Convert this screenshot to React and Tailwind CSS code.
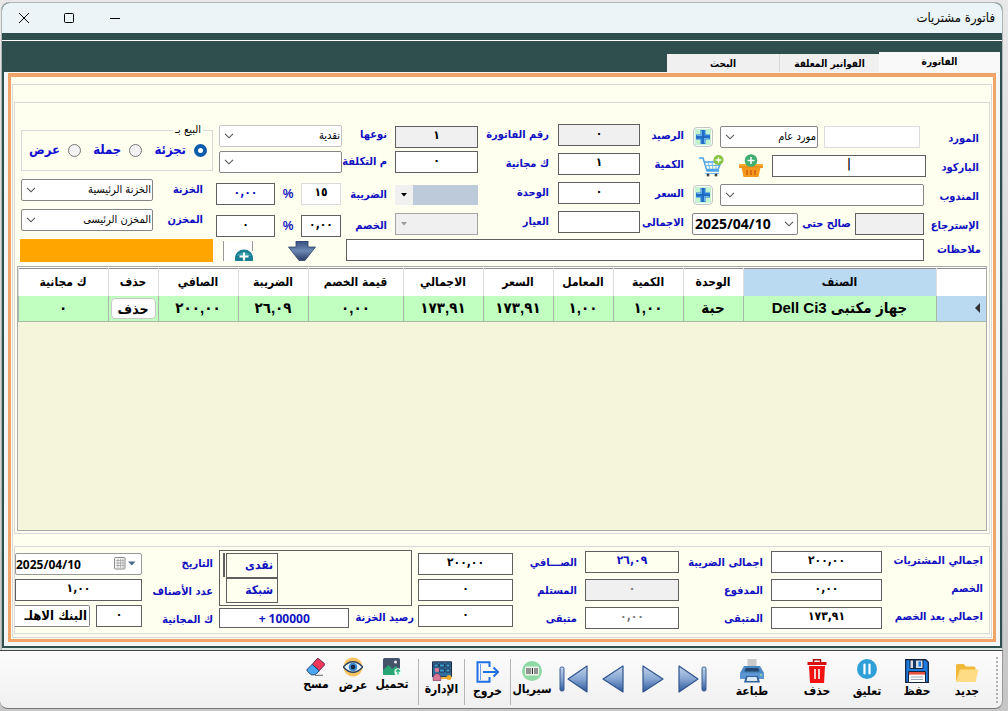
import React from 'react'

const columns = [
    { title: 'الصنف', width: 'w-[193px]' },
    { title: 'الوحدة', width: 'w-[60px]' },
    { title: 'الكمية', width: 'w-[70px]' },
    { title: 'المعامل', width: 'w-[60px]' },
    { title: 'السعر', width: 'w-[70px]' },
    { title: 'الاجمالي', width: 'w-[80px]' },
    { title: 'قيمة الخصم', width: 'w-[95px]' },
    { title: 'الضريبة', width: 'w-[70px]' },
    { title: 'الصافي', width: 'w-[80px]' },
    { title: 'حذف', width: 'w-[50px]' },
    { title: 'ك مجانية', width: 'w-[90px]' },
]

const rows = [
    ['جهاز مكتبى Dell Ci3', 'حبة', '١,٠٠', '١,٠٠', '١٧٣,٩١', '١٧٣,٩١', '٠,٠٠', '٢٦,٠٩', '٢٠٠,٠٠', null, '٠'],
]

/* ---------- form pieces ---------- */

const Label = ({ htmlFor, children }) => (
    <label htmlFor={htmlFor} className="h-[22px] flex items-center whitespace-nowrap text-[11px] font-bold text-[#1010c0]">
        {children}
    </label>
)

const TextBox = ({ className = 'w-full bg-white border-[#5f5f5f]', ...props }) => (
    <input
        type="text"
        className={`block h-[22px] min-w-0 border px-1 pb-1 text-center text-[12px] font-bold outline-none ${className}`}
        {...props}
    />
)

const Chevron = () => (
    <svg viewBox="0 0 10 6" className="pointer-events-none absolute left-[5px] top-2 w-2.5 h-1.5" fill="none" stroke="#555" strokeWidth="1.1">
        <path d="M1 .8l4 4 4-4" />
    </svg>
)

const SelectBox = ({ id, label, value = '', className = 'w-full', border = 'border-[#858585]' }) => (
    <div className={`relative ${className}`}>
        <select
            id={id}
            aria-label={label}
            className={`block h-[22px] w-full appearance-none rounded-xs border bg-white pr-px pl-5 text-[11px] text-black outline-none ${border}`}
        >
            <option>{value}</option>
        </select>
        <Chevron />
    </div>
)

const Radio = ({ id, label, checked }) => (
    <div className="flex items-center gap-2">
        <input
            id={id}
            type="radio"
            name="saleType"
            defaultChecked={checked}
            className="w-[13px] h-[13px] appearance-none rounded-full border border-[#777] bg-[#f3f3f3] checked:border-4 checked:border-[#0c5cab] checked:bg-white"
        />
        <label htmlFor={id} className="text-[13px] leading-5 font-bold text-[#1010d0]">{label}</label>
    </div>
)

const AddButton = ({ label }) => (
    <button aria-label={label} className="w-5 h-5 shrink-0 rounded-sm border border-[#c2c6c2] bg-white flex items-center justify-center">
        <svg viewBox="0 0 16 16" className="w-4 h-4">
            <rect width="16" height="16" fill="#c3f3cf" />
            <path d="M5.500 1h5v4.500H15v5h-4.500V15h-5v-4.500H1v-5h4.500z" fill="#2b7fdb" />
            <path d="M8 1v14M1 8h14" stroke="#1b5cab" strokeWidth="1" />
            <path d="M6.500 2v4.500H2M9.500 14V9.500H14" fill="none" stroke="#6fb4f4" strokeWidth="1" />
        </svg>
    </button>
)

/* ---------- drawings ---------- */

const BasketIcon = () => (
    <svg viewBox="0 0 24 24" className="w-6 h-6">
        <path d="M2.500 13.500h19L19.500 23h-15z" fill="#f39a1e" />
        <path d="M8 16v5M12 16v5M16 16v5" stroke="#d2640f" strokeWidth="1.600" />
        <rect y="10" width="24" height="4" rx="1" fill="#f8a928" />
        <path d="M0 13h24" stroke="#e07a14" strokeWidth="1" />
        <circle cx="12" cy="6.500" r="6.300" fill="#3fae70" />
        <path d="M12 3v7M8.500 6.500h7" stroke="#fff" strokeWidth="1.500" />
    </svg>
)

const CartIcon = () => (
    <svg viewBox="0 0 26 22" className="w-[26px] h-[22px]" fill="none">
        <path d="M1 3h4l4 13h12M6 7h17l-3 7.500H8.500" stroke="#4aa3e8" strokeWidth="1.500" />
        <path d="M10 7l2 7.500M14 7l1 7.500M18 7v7.500M7 10.500h14" stroke="#6dbaf0" />
        <path d="M7 18.500h14" stroke="#6dbaf0" />
        <circle cx="10" cy="20" r="1.500" fill="#444" />
        <circle cx="18" cy="20" r="1.500" fill="#444" />
        <circle cx="20.500" cy="5" r="5" fill="#86c440" />
        <path d="M20.500 2.200v5.600M17.700 5h5.600" stroke="#fff" strokeWidth="1.300" />
    </svg>
)

const DownIcon = () => (
    <svg viewBox="0 0 28 20" className="w-7 h-5">
        <defs>
            <linearGradient id="down" x1="0" y1="0" x2="0" y2="1">
                <stop offset="0" stopColor="#35507d" />
                <stop offset=".5" stopColor="#6d87b4" />
                <stop offset="1" stopColor="#2a3f68" />
            </linearGradient>
        </defs>
        <path d="M8 0h12v6h7.500L17 19.500h-6L.5 6H8z" fill="url(#down)" stroke="#2b4065" strokeWidth=".8" />
    </svg>
)

const TealAddIcon = () => (
    <svg viewBox="0 0 32 20" className="w-8 h-5">
        <path d="M2 0h29v20H2z" fill="#fff" />
        <path d="M1.500 0v20M30.500 0v10" stroke="#999" />
        <path d="M13 20v-3a9 8.500 0 0 1 18 0v3z" fill="#1b7f93" />
        <path d="M15 15a7.500 6 0 0 1 14 0z" fill="#4fb0bd" opacity=".6" />
        <path d="M22 11.500v8M17.500 15.500h9" stroke="#fff" strokeWidth="2.200" />
    </svg>
)

const FolderIcon = () => (
    <svg viewBox="0 0 24 20" className="w-6 h-5">
        <path d="M1 2.500Q1 1 2.500 1h6l2.500 2.500h8Q20.500 3.500 20.500 5v13H1z" fill="#f0b93a" />
        <path d="M5 6.500h18.500L20.500 19H1z" fill="#fddc84" />
    </svg>
)

const FloppyIcon = () => (
    <svg viewBox="0 0 24 24" className="w-6 h-6">
        <path d="M.7 .7h20l2.600 2.600v20H.7z" fill="#1e7be0" stroke="#15233f" strokeWidth="1.300" />
        <path d="M5 1h13v8.500H5z" fill="#d5dde8" stroke="#15233f" />
        <path d="M8 1h3v8H8z" fill="#16375f" />
        <path d="M13.500 2.500h2.500v5h-2.500z" fill="#1e7be0" />
        <path d="M3.500 12.500h17v11h-17z" fill="#fff" stroke="#15233f" />
        <path d="M4 13h16v2.600H4z" fill="#e5533d" />
        <path d="M6 18h12M6 20.500h12" stroke="#9aa7b8" />
    </svg>
)

const PauseIcon = () => (
    <svg viewBox="0 0 20 20" className="w-5 h-5">
        <circle cx="10" cy="10" r="10" fill="#2f9fd8" />
        <path d="M7.500 5.500v9M12.500 5.500v9" stroke="#fff" strokeWidth="2.200" strokeLinecap="round" />
    </svg>
)

const TrashIcon = () => (
    <svg viewBox="0 0 20 24" className="w-5 h-6">
        <path d="M6.500 3V.7h7V3" fill="none" stroke="#a81111" strokeWidth="1.500" />
        <path d="M.5 3h19v3H.5z" fill="#d81010" />
        <path d="M2 7h16l-1 17H3z" fill="#f21212" />
        <path d="M8 10v10M12 10v10" stroke="#fff" strokeWidth="1.600" />
    </svg>
)

const PrinterIcon = () => (
    <svg viewBox="0 0 24 24" className="w-6 h-6">
        <path d="M7.500 0h9v9h-9z" fill="#c9c9c9" />
        <path d="M4 7h16l4 7v6H0v-6z" fill="#4d87c4" />
        <path d="M6 9h12l1.500 3.500h-15z" fill="#23466f" />
        <path d="M0 14h24v6H0z" fill="#5b96d2" />
        <path d="M6 17h12l2 6.500H4z" fill="#2f639b" />
        <path d="M7.500 18h9l1 4h-11z" fill="#dce8f4" />
        <circle cx="21" cy="16" r="1" fill="#8ee0a0" />
    </svg>
)

const BarcodeIcon = () => (
    <svg viewBox="0 0 20 20" className="w-5 h-5">
        <circle cx="10" cy="10" r="10" fill="#8fd9a5" />
        <rect x="3" y="5.500" width="14" height="9" rx="1" fill="#eef3ee" />
        <path d="M5 7v6M7 7v6M10.500 7v6M13 7v6M15 7v6" stroke="#333" strokeWidth="1" />
        <path d="M8.700 7v6" stroke="#333" strokeWidth=".6" />
    </svg>
)

const ExitIcon = () => (
    <svg viewBox="0 0 24 22" className="w-6 h-[22px]" fill="none" stroke="#1f6fe5" strokeWidth="2">
        <path d="M13.500 6V1.200H1.500v19.600h12V16" />
        <path d="M4.500 3v16" strokeWidth="1" stroke="#6aa2f2" />
        <path d="M7 11h15M17.500 6.500L22 11l-4.500 4.500" />
    </svg>
)

const AdminIcon = () => (
    <svg viewBox="0 0 20 20" className="w-5 h-5">
        <path d="M.5 .8h19v15H.5z" fill="#2f6f9e" stroke="#1c2b45" />
        <path d="M2 3h4v3H2zM7.500 3h5v3h-5zM14 3h4v3h-4zM7.500 8h5v3h-5zM14 8h4v3h-4z" fill="#3f9cd2" stroke="#1c2b45" strokeWidth=".8" />
        <circle cx="5" cy="9" r="2.300" fill="#d97794" />
        <path d="M1 19.500q0-7 4-7t4 7z" fill="#d97794" stroke="#6f2f50" strokeWidth=".6" />
        <circle cx="17" cy="16.500" r="2.500" fill="#f0a92b" />
        <path d="M9 17h7" stroke="#f0a92b" strokeWidth="1.800" />
    </svg>
)

const UploadImageIcon = () => (
    <svg viewBox="0 0 19 18" className="w-[19px] h-[18px]">
        <rect width="17" height="17" rx="1.500" fill="#44526a" />
        <path d="M0 12l5.500-5 4 4 3-3L17 12v3.500q0 1.500-1.500 1.500h-14Q0 17 0 15.500z" fill="#27a374" />
        <circle cx="12.500" cy="4" r="1.500" fill="#e8e8e8" />
        <circle cx="15" cy="14" r="3.700" fill="#eafff3" />
        <path d="M15 16.500v-4.500M13 13.500l2-2 2 2" fill="none" stroke="#1fae74" strokeWidth="1.200" />
    </svg>
)

const EyeIcon = () => (
    <svg viewBox="0 0 20 20" className="w-5 h-5">
        <circle cx="10" cy="10" r="9.500" fill="#f9c261" />
        <path d="M.3 10Q10-.5 19.700 10 10 20.500 .3 10z" fill="#e9f3fb" stroke="#27405f" strokeWidth="1.300" />
        <circle cx="10" cy="10" r="4.300" fill="#3b86c8" />
        <circle cx="10" cy="10" r="2.200" fill="#16263d" />
    </svg>
)

const EraserIcon = () => (
    <svg viewBox="0 0 20 18" className="w-5 h-[18px]">
        <path d="M11 .8q1-.6 2 .2l5 4.200q1 1 .2 2l-5 5.600-7-6.400z" fill="#f2365c" stroke="#4a2140" strokeWidth=".9" />
        <path d="M6.200 6.400l7 6.400-3 3.200q-.8.8-2 .8H6q-1 0-1.600-.6l-3-3q-1-1-.1-2.200z" fill="#4aa6ee" stroke="#223a66" strokeWidth=".9" />
        <path d="M9 17.300h8" stroke="#555" strokeWidth=".9" />
    </svg>
)

const NavIcon = ({ path, bar }) => (
    <svg viewBox="0 0 30 28" className="w-[30px] h-7">
        <defs>
            <linearGradient id="steel" x1="0" y1="0" x2="0" y2="1">
                <stop offset="0" stopColor="#c3d3ea" />
                <stop offset=".5" stopColor="#86a5d2" />
                <stop offset="1" stopColor="#2f5a9b" />
            </linearGradient>
        </defs>
        <path d={path} fill="url(#steel)" stroke="#2f558f" strokeWidth="1.200" strokeLinejoin="round" />
        {bar !== undefined && <rect x={bar} y="2" width="4" height="24" rx="1.500" fill="url(#steel)" stroke="#3c5f94" />}
    </svg>
)

const ToolButton = ({ label, children, className = 'w-[50px] pt-2' }) => (
    <button className={`flex flex-col items-center text-[12px] leading-4 font-bold text-black whitespace-nowrap ${className}`}>
        {children}
        <span>{label}</span>
    </button>
)

const Separator = () => <div className="mt-2 h-[46px] w-px shrink-0 bg-[#b5b5b5]" />

/* ---------- sections ---------- */

const TitleBar = () => (
    <header className="h-[30px] shrink-0 flex items-center justify-between rounded-t-lg bg-[#ebf4f6] pr-[7px]">
        <h1 className="text-[13px] text-black">فاتورة مشتريات</h1>
        <div className="flex">
            <button aria-label="تصغير" className="w-[46px] h-7 flex items-center justify-center">
                <svg viewBox="0 0 10 10" className="w-2.5 h-2.5" stroke="#000"><path d="M0 5.500h10" /></svg>
            </button>
            <button aria-label="تكبير" className="w-[46px] h-7 flex items-center justify-center">
                <svg viewBox="0 0 10 10" className="w-2.5 h-2.5" fill="none" stroke="#000"><rect x=".5" y=".5" width="9" height="9" rx="1" /></svg>
            </button>
            <button aria-label="إغلاق" className="w-11 h-7 flex items-center justify-center">
                <svg viewBox="0 0 10 10" className="w-2.5 h-2.5" stroke="#000"><path d="M0 0l10 10M10 0L0 10" /></svg>
            </button>
        </div>
    </header>
)

const Tabs = () => (
    <nav className="h-8 shrink-0 flex items-end bg-[#2f4f4f] border-t border-white px-0.5 text-[10px] font-bold text-black">
        <button className="h-5 w-[121px] bg-[#f9f9f9] pb-0.5">الفاتورة</button>
        <button className="h-[18px] w-[100px] bg-[#f0f0f0] border-l border-[#d9d9d9]">الفواتير المعلقة</button>
        <button className="h-[18px] w-[112px] bg-[#f0f0f0]">البحث</button>
    </nav>
)

const InvoiceForm = () => (
    <section className="shrink-0 pt-[21px]">
        <div className="grid grid-cols-[63fr_235fr_51fr_82fr_80fr_83fr_53fr_126fr_201fr]">
            <div className="min-w-0 pt-1 pr-2.5 flex flex-col gap-[7px]">
                <Label htmlFor="supplierCode">المورد</Label>
                <Label htmlFor="barcode">الباركود</Label>
                <Label htmlFor="agent">المندوب</Label>
                <Label htmlFor="returns">الإسترجاع</Label>
            </div>
            <div className="min-w-0 pt-0.5 flex flex-col gap-[7px]">
                <div className="flex items-center pr-1.5 pl-0.5">
                    <TextBox id="supplierCode" className="w-24 bg-white border-[#dcdcdc]" />
                    <SelectBox label="اسم المورد" value="مورد عام" className="flex-1 mr-1.5 ml-[7px]" />
                    <AddButton label="إضافة مورد" />
                </div>
                <div className="flex items-center h-[22px]">
                    <TextBox id="barcode" className="flex-1 bg-white border-[#5f5f5f]" defaultValue="|" />
                    <button aria-label="السلة" className="mr-[9px]"><BasketIcon /></button>
                    <button aria-label="عربة التسوق" className="mr-[15px] ml-[7px]"><CartIcon /></button>
                </div>
                <div className="flex items-center pr-0.5 pl-0.5">
                    <SelectBox id="agent" className="flex-1 ml-[7px]" />
                    <AddButton label="إضافة مندوب" />
                </div>
                <div className="flex items-center justify-between pr-0.5 pl-px">
                    <TextBox id="returns" className="w-[69px] bg-[#f0f0f0] border-[#5f5f5f]" />
                    <Label htmlFor="validUntil">صالح حتى</Label>
                    <div className="relative w-[106px]" dir="ltr">
                        <select id="validUntil" className="block h-[22px] w-full appearance-none rounded-xs border border-[#858585] bg-white pl-0.5 font-['Noto_Sans',sans-serif] text-[14px] leading-5 font-bold text-black">
                            <option>2025/04/10</option>
                        </select>
                        <svg viewBox="0 0 10 6" className="pointer-events-none absolute right-1 top-2 w-2.5 h-1.5" fill="none" stroke="#555" strokeWidth="1.1">
                            <path d="M1 .8l4 4 4-4" />
                        </svg>
                    </div>
                </div>
            </div>

            <div className="min-w-0 pt-px pr-[7px] flex flex-col gap-[7px]">
                <Label htmlFor="balance">الرصيد</Label>
                <Label htmlFor="quantity">الكمية</Label>
                <Label htmlFor="price">السعر</Label>
                <Label htmlFor="total">الاجمالى</Label>
            </div>
            <div className="min-w-0 flex flex-col gap-[7px]">
                <TextBox id="balance" className="w-full bg-[#f0f0f0] border-[#5f5f5f]" defaultValue="٠" />
                <TextBox id="quantity" defaultValue="١" />
                <TextBox id="price" defaultValue="٠" />
                <TextBox id="total" />
            </div>

            <div className="min-w-0 pr-[9px] flex flex-col gap-[7px]">
                <Label htmlFor="invoiceNo">رقم الفاتورة</Label>
                <Label htmlFor="freeQty">ك مجانية</Label>
                <Label htmlFor="unit">الوحدة</Label>
                <Label htmlFor="caliber">العيار</Label>
            </div>
            <div className="min-w-0 pt-0.5 flex flex-col gap-[11px]">
                <div className="flex flex-col gap-[3px]">
                    <TextBox id="invoiceNo" className="w-full bg-[#f0f0f0] border-[#5f5f5f]" defaultValue="١" />
                    <TextBox id="freeQty" defaultValue="٠" />
                </div>
                <div className="flex flex-col gap-[7px]">
                    <div className="relative h-[22px] py-px">
                        <select id="unit" className="block h-5 w-full appearance-none border-l-[18px] border-[#f0f0f0] bg-[#bccad9]" />
                        <svg viewBox="0 0 6 4" className="pointer-events-none absolute left-1.5 top-[9px] w-1.5 h-1"><path d="M0 0h6L3 3.500z" /></svg>
                    </div>
                    <div className="relative">
                        <select id="caliber" className="block h-[22px] w-full appearance-none border border-[#a5a5a5] bg-[#f0f0f0]" />
                        <svg viewBox="0 0 6 4" className="pointer-events-none absolute left-1.5 top-[9px] w-1.5 h-1" fill="#999"><path d="M0 0h6L3 3.500z" /></svg>
                    </div>
                </div>
            </div>

            <div className="min-w-0 pr-2 flex flex-col gap-[11px]">
                <div className="flex flex-col gap-[5px]">
                    <Label htmlFor="kind">نوعها</Label>
                    <Label htmlFor="cost">م التكلفة</Label>
                </div>
                <div className="flex flex-col gap-[9px]">
                    <Label htmlFor="taxRate">الضريبة</Label>
                    <Label htmlFor="discountRate">الخصم</Label>
                </div>
            </div>
            <div className="min-w-0 pt-px flex flex-col gap-2.5">
                <div className="flex flex-col gap-1 pl-[3px]">
                    <SelectBox id="kind" value="نقدية" border="border-[#c4c4c4]" />
                    <SelectBox id="cost" />
                </div>
                <div className="flex flex-col gap-2.5">
                    <div className="flex items-center justify-between pr-px">
                        <TextBox id="taxRate" className="w-10 bg-white border-[#dcdcdc]" defaultValue="١٥" />
                        <span className="font-['Liberation_Sans',sans-serif] text-[12px] leading-4 font-bold text-[#1010c0]">%</span>
                        <TextBox aria-label="قيمة الضريبة" className="w-[59px] bg-white border-[#5f5f5f] text-[#1010c0]" defaultValue="٠,٠٠" />
                    </div>
                    <div className="flex items-center justify-between pr-px">
                        <TextBox id="discountRate" className="w-10 bg-white border-[#5f5f5f]" defaultValue="٠,٠٠" />
                        <span className="font-['Liberation_Sans',sans-serif] text-[12px] leading-4 font-bold text-[#1010c0]">%</span>
                        <TextBox aria-label="قيمة الخصم" className="w-[59px] bg-white border-[#5f5f5f]" defaultValue="٠" />
                    </div>
                </div>
            </div>

            <div className="min-w-0 pr-[3px] pl-1.5 flex flex-col gap-2">
                <fieldset className="h-[47px] border border-[#d8d8d8] pr-[5px] pl-[7px]">
                    <legend className="mr-1 px-0.5 text-[11px] leading-3 text-black">البيع بـ</legend>
                    <div className="flex items-center justify-between pt-1">
                        <Radio id="retail" label="تجزئة" checked />
                        <Radio id="wholesale" label="جملة" />
                        <Radio id="offer" label="عرض" />
                    </div>
                </fieldset>
                <div className="flex flex-col gap-2">
                    <div className="flex items-center justify-between pr-2.5">
                        <Label htmlFor="safe">الخزنة</Label>
                        <SelectBox id="safe" value="الخزنة الرئيسية" className="w-[132px]" />
                    </div>
                    <div className="flex items-center justify-between pr-2.5">
                        <Label htmlFor="store">المخزن</Label>
                        <SelectBox id="store" value="المخزن الرئيسى" className="w-[132px]" />
                    </div>
                </div>
            </div>
        </div>

        <div className="mt-0.5 grid grid-cols-[63fr_580fr_130fr_201fr]">
            <div className="pr-2"><Label htmlFor="notes">ملاحظات</Label></div>
            <div className="pr-0.5"><TextBox id="notes" /></div>
            <div className="flex items-center justify-between pr-[30px] pl-1.5">
                <button aria-label="إنزال"><DownIcon /></button>
                <button aria-label="إضافة"><TealAddIcon /></button>
            </div>
            <div className="pr-[3px] pl-[5px]"><div className="h-[23px] bg-[#ffa500]" /></div>
        </div>
    </section>
)

const ItemsTable = () => (
    <section className="mt-1 mx-0.5 mb-0.5 flex-1 border border-[#a9a9a9] bg-[#f5f5dc]">
        <div className="border-t border-white">
            <table className="w-full table-fixed border-collapse border-t border-[#909090] text-black">
                <thead>
                    <tr className="h-[27px] bg-white text-[12px] leading-4">
                        <th className="w-[50px]" />
                        {columns.map((col, i) => (
                            <th key={col.title} className={`border-x border-[#dedede] font-bold ${col.width} ${i === 0 ? 'bg-[#badaf2]' : ''}`}>{col.title}</th>
                        ))}
                    </tr>
                </thead>
                <tbody>
                    {rows.map((row, r) => (
                        <tr key={r} className="h-[26px] border-b border-[#a9b9a9] bg-[#c1ffc1] font-['Liberation_Sans','DejaVu_Sans_Condensed',sans-serif] text-[15px] leading-5 font-bold">
                            <th className="bg-[#badaf2]">
                                <svg viewBox="0 0 5 10" className="mr-1.5 w-[5px] h-2.5" fill="#333"><path d="M5 0v10L0 5z" /></svg>
                            </th>
                            {row.map((cell, i) => (
                                <td key={i} className="border-x border-[#a9b9a9] text-center whitespace-nowrap">
                                    {cell === null
                                        ? <button className="h-[21px] w-[45px] rounded-sm border border-[#c8c8c8] bg-[#fdfdfd] align-middle text-[14px] leading-4">حذف</button>
                                        : cell}
                                </td>
                            ))}
                        </tr>
                    ))}
                </tbody>
            </table>
        </div>
    </section>
)

const Totals = () => (
    <section className="shrink-0 mt-3 grid grid-cols-[107fr_111fr_92fr_94fr_72fr_95fr_199fr_77fr_127fr] border border-[#d8d8d8] pt-[3px] pb-0.5">
        <div className="min-w-0 pr-1.5 flex flex-col gap-1.5">
            <Label htmlFor="purchases">اجمالي المشتريات</Label>
            <Label htmlFor="discount">الخصم</Label>
            <Label htmlFor="afterDiscount">اجمالي بعد الخصم</Label>
        </div>
        <div className="min-w-0 pt-px flex flex-col gap-1.5">
            <TextBox id="purchases" defaultValue="٢٠٠,٠٠" />
            <TextBox id="discount" defaultValue="٠,٠٠" />
            <TextBox id="afterDiscount" defaultValue="١٧٣,٩١" />
        </div>
        <div className="min-w-0 pt-0.5 pr-2 flex flex-col gap-1.5">
            <Label htmlFor="taxTotal">اجمالى الضريبة</Label>
            <Label htmlFor="paid">المدفوع</Label>
            <Label htmlFor="remaining">المتبقى</Label>
        </div>
        <div className="min-w-0 pt-px flex flex-col gap-1.5">
            <TextBox id="taxTotal" className="w-full bg-[#fffff0] border-[#5f5f5f] text-[#1010c0]" defaultValue="٢٦,٠٩" />
            <TextBox id="paid" className="w-full bg-[#f0f0f0] border-[#5f5f5f] text-[#777]" defaultValue="٠" />
            <TextBox id="remaining" className="w-full bg-white border-[#5f5f5f] text-[#777]" defaultValue="٠,٠٠" />
        </div>
        <div className="min-w-0 pt-0.5 pr-2 flex flex-col gap-1.5">
            <Label htmlFor="net">الصـــافي</Label>
            <Label htmlFor="received">المستلم</Label>
            <Label htmlFor="left">متبقى</Label>
        </div>
        <div className="min-w-0 pt-[3px] flex flex-col gap-1">
            <TextBox id="net" defaultValue="٢٠٠,٠٠" />
            <TextBox id="received" defaultValue="٠" />
            <TextBox id="left" defaultValue="٠" />
        </div>
        <div className="min-w-0 pr-1 flex flex-col gap-px">
            <div className="mr-0.5 h-14 border border-[#5f5f5f] flex items-start pt-0.5 pl-[3px] gap-px">
                <div className="flex-1" />
                <ul className="w-[52px] border border-[#5f5f5f] text-[12px] font-bold text-[#1010c0] leading-[23px]">
                    <li className="border-b-2 border-[#5f5f5f] pr-1">نقدى</li>
                    <li className="pr-1">شبكة</li>
                </ul>
                <div className="w-0.5 h-6 bg-[#5f5f5f]" />
            </div>
            <div className="flex items-center">
                <Label htmlFor="safeBalance">رصيد الخزنة</Label>
                <input
                    id="safeBalance"
                    dir="ltr"
                    defaultValue="+ 100000"
                    className="mr-1.5 h-5 min-w-0 flex-1 border border-[#5f5f5f] bg-white text-center font-['Noto_Sans',sans-serif] text-[12px] font-bold text-[#1010c0]"
                />
            </div>
        </div>
        <div className="min-w-0 pt-[3px] pr-1.5 flex flex-col gap-1.5">
            <Label htmlFor="date">التاريخ</Label>
            <Label htmlFor="itemsCount">عدد الأصناف</Label>
            <Label htmlFor="freeTotal">ك المجانية</Label>
        </div>
        <div className="min-w-0 pt-[3px] flex flex-col gap-1">
            <div className="relative" dir="ltr">
                <input id="date" defaultValue="2025/04/10" className="block h-[22px] w-full rounded-xs border border-[#999] bg-white font-['Noto_Sans',sans-serif] text-[12px] font-bold text-black" />
                <svg viewBox="0 0 22 13" className="pointer-events-none absolute right-1.5 top-1 w-[22px] h-[13px]">
                    <rect x=".5" y=".5" width="10.500" height="11.500" rx="1" fill="#f4f4f4" stroke="#888" />
                    <path d="M2 3.500h8M2 6h8M2 8.500h8M4 2v9M6.500 2v9M9 2v9" stroke="#a5a5a5" strokeWidth=".8" />
                    <path d="M14 4.500h7.500l-3.700 4z" fill="#4a6a8c" />
                </svg>
            </div>
            <TextBox id="itemsCount" defaultValue="١,٠٠" />
            <div className="flex gap-1.5">
                <TextBox id="freeTotal" className="w-[46px] shrink-0 bg-white border-[#5f5f5f]" defaultValue="٠" />
                <select aria-label="البنك" className="h-[22px] min-w-0 flex-1 appearance-none overflow-hidden rounded-l-none rounded-r-xs border border-l-0 border-[#858585] bg-white pr-0.5 text-[13px] leading-4 font-bold text-black">
                    <option>البنك الاهلـ</option>
                </select>
            </div>
        </div>
    </section>
)

const Toolbar = () => (
    <footer className="h-[59px] shrink-0 mr-[5px] flex items-start rounded-b-lg border-y border-t-[#444] border-b-[#777] border-r border-r-[#999] bg-linear-to-b from-[#fcfcfc] to-[#f0f0f0]">
        <div className="mx-1 mt-1.5 h-[46px] border-r-2 border-dotted border-[#b0b0b0]" />
        <ToolButton label="جديد"><div className="h-6 flex items-end"><FolderIcon /></div></ToolButton>
        <ToolButton label="حفظ"><FloppyIcon /></ToolButton>
        <ToolButton label="تعليق"><div className="h-6"><PauseIcon /></div></ToolButton>
        <ToolButton label="حذف"><TrashIcon /></ToolButton>
        <div className="w-[15px]" />
        <ToolButton label="طباعة"><PrinterIcon /></ToolButton>
        <div className="w-3.5" />
        <div className="mt-3.5 flex">
            <button aria-label="الأخير" className="w-10 flex justify-center"><NavIcon path="M1 1v26l19-13z" bar={24} /></button>
            <button aria-label="التالي" className="w-10 flex justify-center"><NavIcon path="M5 1v26l20-13z" /></button>
            <button aria-label="السابق" className="w-10 flex justify-center"><NavIcon path="M25 1v26L5 14z" /></button>
            <button aria-label="الأول" className="w-10 flex justify-center"><NavIcon path="M29 1v26L10 14z" bar={2} /></button>
        </div>
        <ToolButton label="سيريال" className="w-[42px] pt-2.5"><BarcodeIcon /></ToolButton>
        <Separator />
        <ToolButton label="خروج" className="w-[45px] pt-2.5"><ExitIcon /></ToolButton>
        <Separator />
        <ToolButton label="الإدارة" className="w-[45px] pt-2.5"><AdminIcon /></ToolButton>
        <Separator />
        <div className="w-1.5" />
        <ToolButton label="تحميل" className="w-10 pt-[7px]"><UploadImageIcon /></ToolButton>
        <ToolButton label="عرض" className="w-[38px] pt-1.5"><EyeIcon /></ToolButton>
        <ToolButton label="مسح" className="w-9 pt-[7px]"><EraserIcon /></ToolButton>
    </footer>
)

const App = () => {
    return (
        <div dir="rtl" className="min-h-screen flex flex-col bg-linear-to-b from-[#e8e8e8] to-[#c6c6c6] pt-0.5 pb-0.5 font-['DejaVu_Sans_Condensed','DejaVu_Sans',sans-serif]">
            <div className="flex-1 flex flex-col ml-px mr-[5px] rounded-t-lg border border-b-0 border-[#b0b5b5] bg-[#2f4f4f]">
                <TitleBar />
                <div className="h-[7px] shrink-0 bg-[#2f4f4f]" />
                <Tabs />
                <main className="flex-1 flex flex-col border-x-2 border-b-2 border-[#2f4f4f] bg-[#f4f7f7] px-1 pt-px pb-1">
                    <div className="flex-1 flex flex-col border-[3px] border-t-4 border-[#f0a468] bg-[#fffff0] px-px pt-[7px] pb-px">
                        <div className="flex-1 flex flex-col border border-[#d8d8d8] px-px pt-[17px] pb-[3px]">
                            <div className="flex-1 flex flex-col border border-[#d8d8d8]">
                                <InvoiceForm />
                                <ItemsTable />
                            </div>
                            <Totals />
                        </div>
                    </div>
                </main>
                <div className="h-0.5 shrink-0 bg-[#dfe9e6]" />
            </div>
            <Toolbar />
        </div>
    )
}

export default App
